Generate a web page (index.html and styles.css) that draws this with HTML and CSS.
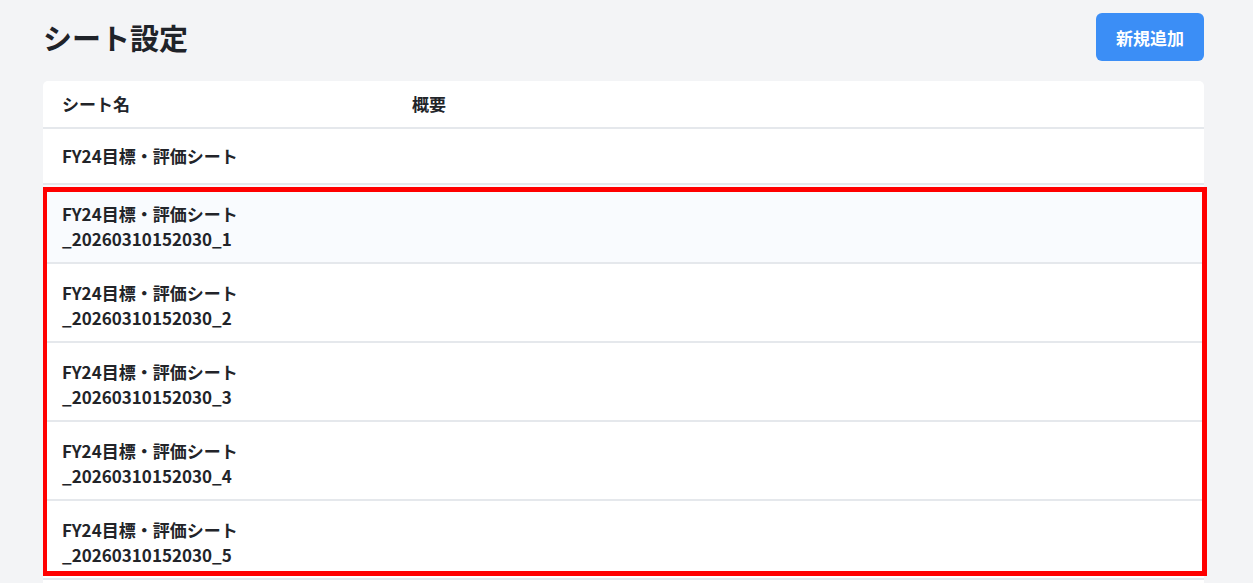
FILE: index.html
```html
<!DOCTYPE html>
<html lang="ja">
<head>
<meta charset="utf-8">
<title>シート設定</title>
<link rel="stylesheet" href="styles.css">
</head>
<body>
<div class="page">
  <header class="page-head">
    <h1 class="page-title">シート設定</h1>
    <button class="btn-primary" type="button">新規追加</button>
  </header>
  <section class="card">
    <div class="row row-head">
      <div class="cell">シート名</div>
      <div class="cell">概要</div>
    </div>
    <div class="row row-single">
      <div class="cell">FY24目標・評価シート</div>
      <div class="cell"></div>
    </div>
    <div class="group">
      <div class="row row-double row-hover">
        <div class="cell">FY24目標・評価シート<br>_20260310152030_1</div>
        <div class="cell"></div>
      </div>
      <div class="row row-double">
        <div class="cell">FY24目標・評価シート<br>_20260310152030_2</div>
        <div class="cell"></div>
      </div>
      <div class="row row-double">
        <div class="cell">FY24目標・評価シート<br>_20260310152030_3</div>
        <div class="cell"></div>
      </div>
      <div class="row row-double">
        <div class="cell">FY24目標・評価シート<br>_20260310152030_4</div>
        <div class="cell"></div>
      </div>
      <div class="row row-double">
        <div class="cell">FY24目標・評価シート<br>_20260310152030_5</div>
        <div class="cell"></div>
      </div>
    </div>
  </section>
</div>
</body>
</html>
```
FILE: styles.css
```css
html, body {
  margin: 0;
  padding: 0;
  background: #f3f4f6;
  height: 100%;
  overflow: hidden;
}
body {
  font-family: "Noto Sans CJK JP", "Noto Sans", sans-serif;
  color: #222429;
}
.page {
  width: 1161px;
  margin-left: 43px;
  padding-top: 13px;
}
.page-head {
  display: flex;
  align-items: center;
  justify-content: space-between;
  height: 48px;
  margin-bottom: 20px;
}
.page-title {
  margin: 0;
  font-size: 29px;
  font-weight: 700;
  line-height: 40px;
  color: #1f2329;
}
.btn-primary {
  width: 108px;
  height: 48px;
  border: 0;
  border-radius: 6px;
  background: #3b8ef6;
  color: #ffffff;
  font-family: inherit;
  font-size: 17px;
  font-weight: 700;
  padding: 0;
}
.card {
  background: #ffffff;
  border-radius: 5px 5px 0 0;
  padding-bottom: 40px;
}
.row {
  display: grid;
  grid-template-columns: 350px 1fr;
  border-bottom: 2px solid #e5e8ec;
  font-size: 17px;
  font-weight: 700;
  line-height: 25px;
}
.cell {
  padding-left: 19px;
  white-space: nowrap;
}
.row-head .cell {
  padding-top: 10px;
  padding-bottom: 11px;
}
.row-single .cell {
  padding-top: 14px;
  padding-bottom: 15px;
}
.row-double .cell {
  padding-top: 16px;
  padding-bottom: 11px;
}
.row-hover {
  background: #f9fbfe;
}
.group {
  position: relative;
}
.group::after {
  content: "";
  position: absolute;
  top: 2px;
  bottom: 4px;
  left: 0;
  right: -3px;
  border: 5px solid #ff0000;
  border-left-width: 4px;
  pointer-events: none;
}
```
